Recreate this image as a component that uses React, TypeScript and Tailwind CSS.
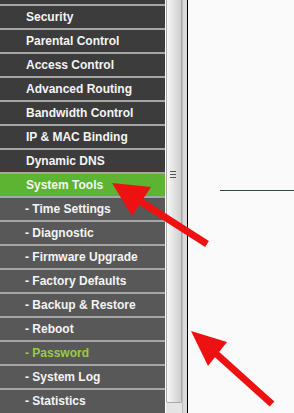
const items: { label: string; kind: 'main' | 'active' | 'sub' | 'subActive' }[] = [
  { label: 'Security', kind: 'main' },
  { label: 'Parental Control', kind: 'main' },
  { label: 'Access Control', kind: 'main' },
  { label: 'Advanced Routing', kind: 'main' },
  { label: 'Bandwidth Control', kind: 'main' },
  { label: 'IP & MAC Binding', kind: 'main' },
  { label: 'Dynamic DNS', kind: 'main' },
  { label: 'System Tools', kind: 'active' },
  { label: '- Time Settings', kind: 'sub' },
  { label: '- Diagnostic', kind: 'sub' },
  { label: '- Firmware Upgrade', kind: 'sub' },
  { label: '- Factory Defaults', kind: 'sub' },
  { label: '- Backup & Restore', kind: 'sub' },
  { label: '- Reboot', kind: 'sub' },
  { label: '- Password', kind: 'subActive' },
  { label: '- System Log', kind: 'sub' },
  { label: '- Statistics', kind: 'sub' },
]

function MenuRow({ label, kind }: { label: string; kind: string }) {
  const bg =
    kind === 'main' ? 'bg-[#3c3c3c]' : kind === 'active' ? 'bg-[#5cb432]' : 'bg-[#585858]'
  const color = kind === 'subActive' ? 'text-[#9ccc3c]' : 'text-[#f4f4f4]'
  return (
    <div>
      <div className="h-[2px] bg-[#a6a6a6]" />
      <div className={`h-[22px] flex items-center ${bg} ${color} ${kind === 'main' || kind === 'active' ? 'pl-[26px]' : 'pl-[25px]'}`}>
        <span className="text-[12px] font-bold leading-none whitespace-nowrap">{label}</span>
      </div>
    </div>
  )
}

export default function App() {
  return (
    <div
      className="relative w-[294px] h-[413px] overflow-hidden flex bg-[#fafafa]"
      style={{ fontFamily: '"Liberation Sans", Arial, sans-serif' }}
    >
      {/* left menu */}
      <div className="w-[165px] shrink-0 flex flex-col bg-[#585858]">
        <div className="h-[4px] bg-[#3c3c3c]" />
        {items.map((it) => (
          <MenuRow key={it.label} label={it.label} kind={it.kind} />
        ))}
      </div>

      {/* frame scrollbar */}
      <div className="w-[1px] bg-white" />
      <div className="w-[21px] shrink-0 flex bg-[#e4e4e4]">
        <div className="w-[16px] h-[403px] border border-[#a8a8a8] border-t-0 rounded-b-[2px] bg-gradient-to-r from-[#f8f8f8] via-[#e2e2e2] to-[#cfcfcf] flex flex-col items-center pt-[171px]">
          <div className="flex flex-col gap-[2px] w-[6px] -ml-[2px]">
            <div className="h-[1px] bg-[#555]" />
            <div className="h-[1px] bg-[#555]" />
            <div className="h-[1px] bg-[#555]" />
          </div>
        </div>
        <div className="w-[5px] bg-[#dadada] border-l border-[#bdbdbd]" />
      </div>
      <div className="w-[1px] bg-black" />

      {/* content */}
      <div className="flex-1 bg-[#fafafa] pt-[190px] pl-[32px]">
        <div className="h-[1px] bg-[#2e4a3c]" />
      </div>

      {/* red annotation arrows */}
      <svg className="absolute inset-0 pointer-events-none" width="294" height="413" viewBox="0 0 294 413">
        <line x1="135" y1="198" x2="207" y2="244" stroke="#ee1111" strokeWidth="7" />
        <polygon points="112,183 151,187 132,216" fill="#ee1111" />
        <line x1="212" y1="350" x2="272" y2="404" stroke="#ee1111" strokeWidth="7" />
        <polygon points="191,331 227,342 208,366" fill="#ee1111" />
      </svg>
    </div>
  )
}
